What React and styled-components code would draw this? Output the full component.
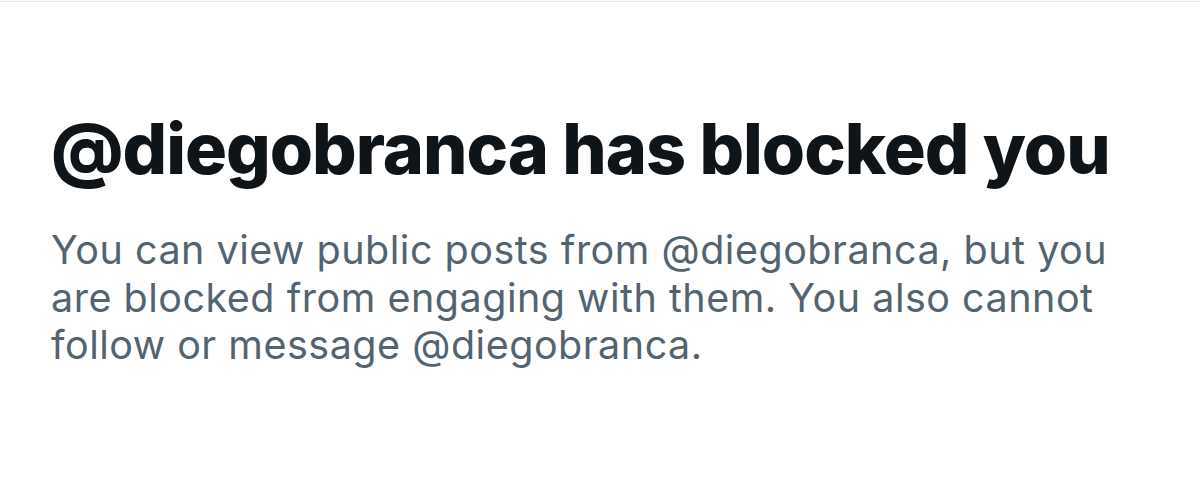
import React from "react";
import styled, { createGlobalStyle } from "styled-components";

const GlobalStyle = createGlobalStyle`
  html, body {
    margin: 0;
    padding: 0;
    background: #fff;
  }
  body {
    font-family: Inter, "Noto Sans", sans-serif;
  }
`;

const Page = styled.div`
  width: 1200px;
  height: 490px;
  background: #fff;
  border-top: 1px solid #e6e9ea;
  margin-top: 1px;
  box-sizing: border-box;
  overflow: hidden;
`;

const Content = styled.div`
  display: flex;
  flex-direction: column;
  padding: 105px 0 0 51px;
  width: 1100px;
`;

const Title = styled.h1`
  margin: 0;
  font-size: 70px;
  font-weight: 800;
  line-height: 84px;
  letter-spacing: -1px;
  color: #0f1419;
`;

const Message = styled.p`
  margin: 36px 0 0;
  font-size: 39.5px;
  font-weight: 400;
  line-height: 47.5px;
  letter-spacing: 0.5px;
  color: #536471;
`;

export default function App() {
  const user = "diegobranca";
  return (
    <Page>
      <GlobalStyle />
      <Content>
        <Title>@{user} has blocked you</Title>
        <Message>
          You can view public posts from @{user}, but you
          <br />
          are blocked from engaging with them. You also cannot
          <br />
          follow or message @{user}.
        </Message>
      </Content>
    </Page>
  );
}
